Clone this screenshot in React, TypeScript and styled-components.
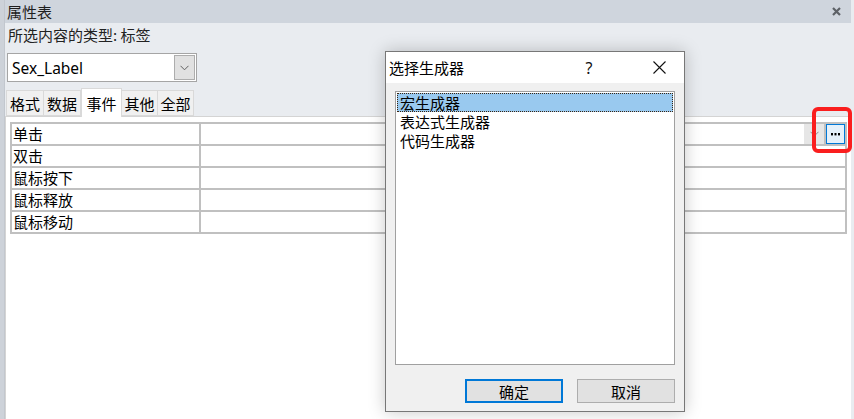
import React from 'react';
import styled, { createGlobalStyle } from 'styled-components';

const cjk = `"Microsoft YaHei", "Noto Sans CJK SC", "Noto Sans", sans-serif`;

const GlobalStyle = createGlobalStyle`
	html, body {
		margin: 0;
		padding: 0;
		background: #e9ecf0;
	}
	body {
		font-family: ${cjk};
		font-size: 15px;
		color: #000;
	}
`;

const Frame = styled.div`
	position: relative;
	width: 854px;
	height: 419px;
	overflow: hidden;
	display: flex;
	background: #e9ecf0;
`;

const LeftEdge = styled.div`
	width: 5px;
	background: #cdd2d9;
	border-right: 1px solid #c2c7ce;
	box-sizing: border-box;
`;

const Sheet = styled.div`
	width: 846px;
	display: flex;
	flex-direction: column;
`;

const TitleBar = styled.div`
	height: 23px;
	flex: none;
	display: flex;
	align-items: center;
	justify-content: space-between;
	padding: 0 10px 0 2px;
	background: #cfd5dd;
	font-size: 15px;
	line-height: 23px;
	color: #1e1e1e;
`;

const TypeLine = styled.div`
	height: 24px;
	line-height: 24px;
	padding-left: 3px;
	font-size: 15px;
	color: #222;
`;

const Combo = styled.div`
	margin: 6px 0 0 2px;
	width: 190px;
	height: 29px;
	box-sizing: border-box;
	border: 1px solid #a5a5a5;
	background: #fff;
	display: flex;
	align-items: center;
	padding: 1px 1px 1px 4px;
`;

const ComboText = styled.div`
	flex: 1;
	font-family: "Noto Sans", "Open Sans", sans-serif;
	font-size: 15.5px;
	color: #000;
`;

const ComboButton = styled.div`
	width: 21px;
	height: 100%;
	box-sizing: border-box;
	border: 1px solid #adadad;
	background: #e1e1e1;
	display: flex;
	align-items: center;
	justify-content: center;
`;

const TabRow = styled.div`
	margin-top: 5px;
	height: 29px;
	padding-left: 1px;
	display: flex;
	align-items: flex-end;
`;

const Tab = styled.div<{ $active?: boolean; $w: number }>`
	width: ${(p) => p.$w}px;
	height: ${(p) => (p.$active ? 29 : 26)}px;
	box-sizing: border-box;
	margin-bottom: ${(p) => (p.$active ? -1 : 0)}px;
	position: relative;
	z-index: ${(p) => (p.$active ? 1 : 0)};
	border: 1px solid #d9d9d9;
	border-bottom: ${(p) => (p.$active ? 'none' : '1px solid #d9d9d9')};
	border-left: ${(p) => (p.$active ? '1px solid #d9d9d9' : 'none')};
	background: ${(p) => (p.$active ? '#ffffff' : '#f0f0f0')};
	display: flex;
	align-items: center;
	justify-content: center;
	font-size: 15px;
	&:first-child {
		border-left: 1px solid #d9d9d9;
	}
`;

const Content = styled.div`
	flex: 1;
	background: #fff;
	border-top: 1px solid #d4d4d4;
	border-left: 1px solid #d4d4d4;
	padding: 5px 0 0 4px;
`;

const PropGrid = styled.div`
	width: 837px;
	box-sizing: border-box;
	display: grid;
	grid-template-columns: 187px 1fr;
	gap: 2px;
	padding: 2px;
	background: #c0c0c0;
`;

const NameCell = styled.div`
	height: 20px;
	line-height: 20px;
	background: #fff;
	padding-left: 1px;
	font-size: 15px;
	white-space: nowrap;
`;

const ValueCell = styled.div<{ $tools?: boolean }>`
	height: 20px;
	background: ${(p) => (p.$tools ? 'transparent' : '#fff')};
	display: flex;
	gap: 2px;
`;

const ValueInput = styled.div`
	flex: 1;
	background: #fff;
	display: flex;
	justify-content: flex-end;
`;

const DropArrow = styled.div`
	width: 20px;
	background: #e6e6e6;
	display: flex;
	align-items: center;
	justify-content: center;
`;

const BuildButton = styled.div`
	width: 19px;
	box-sizing: border-box;
	border: 1px solid #0078d7;
	background: #e5f1fb;
	display: flex;
	align-items: center;
	justify-content: center;
`;

const RightEdge = styled.div`
	width: 3px;
	background: #e9ecf0;
`;

const Highlight = styled.div`
	position: absolute;
	left: 812px;
	top: 107px;
	width: 40px;
	height: 46px;
	box-sizing: border-box;
	border: 4px solid #fa1e1e;
	border-radius: 6px;
`;

const Dialog = styled.div`
	position: absolute;
	left: 385px;
	top: 51px;
	width: 300px;
	height: 361px;
	box-sizing: border-box;
	border: 1px solid #777;
	background: #f0f0f0;
	box-shadow: 0 0 16px rgba(0, 0, 0, 0.22);
	display: flex;
	flex-direction: column;
`;

const DialogTitle = styled.div`
	height: 31px;
	flex: none;
	background: #fff;
	display: flex;
	align-items: center;
	padding-left: 3px;
	font-size: 15px;
`;

const DialogCaption = styled.div`
	flex: 1;
`;

const HelpMark = styled.div`
	width: 20px;
	margin-right: 38px;
	text-align: center;
	font-family: "Noto Sans", sans-serif;
	font-size: 16px;
	color: #111;
`;

const CloseMark = styled.div`
	width: 44px;
	display: flex;
	justify-content: center;
	margin-right: 3px;
`;

const DialogBody = styled.div`
	flex: 1;
	padding: 8px 8px 0 9px;
	display: flex;
	flex-direction: column;
`;

const ListBox = styled.div`
	width: 280px;
	height: 274px;
	box-sizing: border-box;
	border: 1px solid #a0a0a0;
	background: #fff;
	padding: 1px;
`;

const ListItem = styled.div<{ $selected?: boolean }>`
	height: 19px;
	line-height: 17px;
	box-sizing: border-box;
	padding-left: 2px;
	font-size: 15px;
	background: ${(p) => (p.$selected ? '#99c9ef' : 'transparent')};
	border: 1px ${(p) => (p.$selected ? 'dotted #3a2410' : 'solid transparent')};
	white-space: nowrap;
`;

const ButtonRow = styled.div`
	margin-top: 14px;
	display: flex;
	justify-content: flex-end;
	gap: 14px;
	padding-right: 1px;
`;

const DialogButton = styled.div<{ $default?: boolean }>`
	width: 98px;
	height: 24px;
	box-sizing: border-box;
	border: ${(p) => (p.$default ? '2px solid #0078d7' : '1px solid #adadad')};
	background: #e1e1e1;
	display: flex;
	align-items: center;
	justify-content: center;
	font-size: 15px;
`;

const Chevron = ({ color = '#606060' }: { color?: string }) => (
	<svg width="9" height="6" viewBox="0 0 9 6">
		<path d="M0.5 0.8 L4.5 4.8 L8.5 0.8" fill="none" stroke={color} strokeWidth="1" />
	</svg>
);

const Ellipsis = () => (
	<svg width="9" height="3" viewBox="0 0 9 3">
		<rect x="0" y="0" width="2" height="2.4" fill="#000" />
		<rect x="3.5" y="0" width="2" height="2.4" fill="#000" />
		<rect x="7" y="0" width="2" height="2.4" fill="#000" />
	</svg>
);

const tabs = [
	{ label: '格式', w: 38 },
	{ label: '数据', w: 37 },
	{ label: '事件', w: 41 },
	{ label: '其他', w: 36 },
	{ label: '全部', w: 36 },
];

const events = ['单击', '双击', '鼠标按下', '鼠标释放', '鼠标移动'];

const builders = ['宏生成器', '表达式生成器', '代码生成器'];

export default function App() {
	return (
		<>
			<GlobalStyle />
			<Frame>
				<LeftEdge />
				<Sheet>
					<TitleBar>
						<span>属性表</span>
						<svg width="9" height="9" viewBox="0 0 9 9">
							<path d="M1 1 L8 8 M8 1 L1 8" stroke="#5d6166" strokeWidth="2.2" />
						</svg>
					</TitleBar>
					<TypeLine>所选内容的类型: 标签</TypeLine>
					<Combo>
						<ComboText>Sex_Label</ComboText>
						<ComboButton>
							<Chevron />
						</ComboButton>
					</Combo>
					<TabRow>
						{tabs.map((t) => (
							<Tab key={t.label} $w={t.w} $active={t.label === '事件'}>
								{t.label}
							</Tab>
						))}
					</TabRow>
					<Content>
						<PropGrid>
							{events.map((e, i) => (
								<React.Fragment key={e}>
									<NameCell>{e}</NameCell>
									{i === 0 ? (
										<ValueCell $tools>
											<ValueInput>
												<DropArrow>
													<Chevron color="#8a8a8a" />
												</DropArrow>
											</ValueInput>
											<BuildButton>
												<Ellipsis />
											</BuildButton>
										</ValueCell>
									) : (
										<ValueCell />
									)}
								</React.Fragment>
							))}
						</PropGrid>
					</Content>
				</Sheet>
				<RightEdge />

				<Highlight />

				<Dialog>
					<DialogTitle>
						<DialogCaption>选择生成器</DialogCaption>
						<HelpMark>?</HelpMark>
						<CloseMark>
							<svg width="13" height="13" viewBox="0 0 13 13">
								<path d="M0.5 0.5 L12.5 12.5 M12.5 0.5 L0.5 12.5" stroke="#111" strokeWidth="1.1" />
							</svg>
						</CloseMark>
					</DialogTitle>
					<DialogBody>
						<ListBox>
							{builders.map((b, i) => (
								<ListItem key={b} $selected={i === 0}>
									{b}
								</ListItem>
							))}
						</ListBox>
						<ButtonRow>
							<DialogButton $default>确定</DialogButton>
							<DialogButton>取消</DialogButton>
						</ButtonRow>
					</DialogBody>
				</Dialog>
			</Frame>
		</>
	);
}
